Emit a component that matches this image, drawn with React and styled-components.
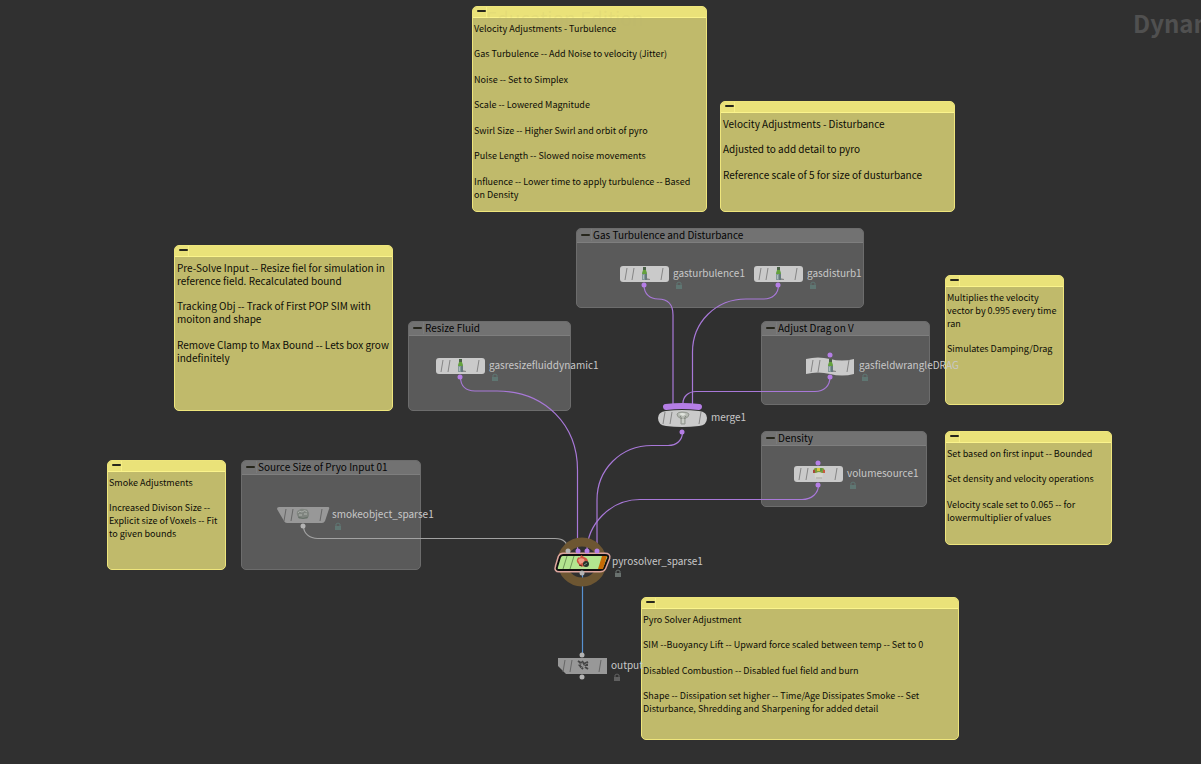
import React from "react";
import styled, { createGlobalStyle } from "styled-components";

const GlobalStyle = createGlobalStyle`
  * { box-sizing: border-box; }
  body {
    margin: 0;
    background: #303030;
    font-family: "Noto Sans CJK JP", "Noto Sans", sans-serif;
  }
  p { margin: 0; }
`;

const Canvas = styled.main`
  position: relative;
  width: 100%;
  min-height: 100vh;
  overflow: hidden;
`;

const ContextTitle = styled.h1`
  position: absolute;
  left: 1133px;
  top: 5px;
  margin: 0;
  font-size: 24px;
  line-height: 36px;
  font-weight: 700;
  color: #505050;
`;

const EditionMark = styled.div`
  position: absolute;
  left: 486px;
  top: 3px;
  font-size: 19px;
  line-height: 30px;
  color: rgba(190, 180, 110, 0.15);
  pointer-events: none;
`;

const Note = styled.article`
  position: absolute;
  left: ${(p) => p.$x}px;
  top: ${(p) => p.$y}px;
  width: ${(p) => p.$w}px;
  min-height: ${(p) => p.$h}px;
  border: 1px solid #eee57c;
  border-radius: 5px;
  background: #c0ba6b;
  overflow: hidden;
`;

const NoteHeader = styled.header`
  display: flex;
  height: 11px;
  background: #eae279;
  border-bottom: 1px solid #fbf48c;
`;

const NoteToggle = styled.button`
  display: flex;
  align-items: flex-start;
  justify-content: center;
  width: 14px;
  padding: 3px 0 0 3px;
  border: 0;
  border-right: 1px solid #f6ef86;
  background: transparent;
`;

const NoteBody = styled.div`
  padding: 4px 0 4px ${(p) => (p.$large ? 2 : 1)}px;
  font-size: ${(p) => (p.$large ? 10 : 9)}px;
  line-height: 13px;
  color: #0c0c06;
  white-space: nowrap;
  p { margin-bottom: 12px; }
  p:nth-child(even) { margin-bottom: 13px; }
  p:last-child { margin-bottom: 0; }
`;

const Dash = styled.span`
  display: block;
  width: 9px;
  height: 2px;
  border-radius: 1px;
  background: #26261c;
`;

const Group = styled.section`
  position: absolute;
  left: ${(p) => p.$x}px;
  top: ${(p) => p.$y}px;
  width: ${(p) => p.$w}px;
  height: ${(p) => p.$h}px;
  border: 1px solid #6c6c6c;
  border-radius: 5px;
  background: #5a5a5a;
  overflow: hidden;
`;

const GroupHeader = styled.header`
  display: flex;
  align-items: flex-start;
  height: 14px;
  background: #727272;
  border-bottom: 1px solid #7e7e7e;
`;

const GroupToggle = styled.button`
  display: flex;
  align-items: center;
  justify-content: center;
  width: 15px;
  height: 12px;
  padding: 0 0 0 2px;
  border: 0;
  border-right: 1px solid #7a7a7a;
  background: transparent;
`;

const GroupTitle = styled.h2`
  margin: 0 0 0 1px;
  font-size: 10px;
  line-height: 11px;
  font-weight: 400;
  color: #050505;
  white-space: nowrap;
`;

const Wires = styled.svg`
  position: absolute;
  left: 0;
  top: 0;
  width: 1px;
  height: 1px;
  overflow: visible;
  pointer-events: none;
`;

const NodeBox = styled.div`
  position: absolute;
  left: ${(p) => p.$x}px;
  top: ${(p) => p.$y}px;
  display: flex;
  align-items: center;
  gap: 4px;
`;

const NodeDrawing = styled.svg`
  display: block;
  flex: none;
  overflow: visible;
`;

const NodeLabel = styled.div`
  position: relative;
  padding-bottom: 2px;
  font-size: 10px;
  line-height: 16px;
  color: #c8c8c8;
  white-space: nowrap;
`;

const LockBadge = styled.svg`
  position: absolute;
  left: 2px;
  top: 16px;
`;

const NOTES = [
  { x: 472, y: 6, w: 235, h: 206, text: ["Velocity Adjustments - Turbulence", "Gas Turbulence -- Add Noise to velocity (Jitter)", "Noise -- Set to Simplex", "Scale -- Lowered Magnitude", "Swirl Size -- Higher Swirl and orbit of pyro", "Pulse Length -- Slowed noise movements", "Influence -- Lower time to apply turbulence -- Based\non Density"] },
  { x: 720, y: 101, w: 235, h: 111, large: true, text: ["Velocity Adjustments - Disturbance", "Adjusted to add detail to pyro", "Reference scale of 5 for size of dusturbance"] },
  { x: 174, y: 245, w: 219, h: 166, large: true, text: ["Pre-Solve Input -- Resize fiel for simulation in\nreference field. Recalculated bound", "Tracking Obj -- Track of First POP SIM with\nmoiton and shape", "Remove Clamp to Max Bound -- Lets box grow\nindefinitely"] },
  { x: 945, y: 275, w: 119, h: 130, text: ["Multiplies the velocity\nvector by 0.995 every time\nran", "Simulates Damping/Drag"] },
  { x: 945, y: 431, w: 167, h: 114, text: ["Set based on first input -- Bounded", "Set density and velocity operations", "Velocity scale set to 0.065 -- for\nlowermultiplier of values"] },
  { x: 107, y: 460, w: 119, h: 110, text: ["Smoke Adjustments", "Increased Divison Size --\nExplicit size of Voxels -- Fit\nto given bounds"] },
  { x: 641, y: 597, w: 318, h: 143, text: ["Pyro Solver Adjustment", "SIM --Buoyancy Lift -- Upward force scaled between temp -- Set to 0", "Disabled Combustion -- Disabled fuel field and burn", "Shape -- Dissipation set higher -- Time/Age Dissipates Smoke -- Set\nDisturbance, Shredding and Sharpening for added detail"] },
];

const GROUPS = [
  { x: 576, y: 228, w: 288, h: 80, title: "Gas Turbulence and Disturbance" },
  { x: 408, y: 321, w: 163, h: 90, title: "Resize Fluid" },
  { x: 761, y: 321, w: 169, h: 84, title: "Adjust Drag on V" },
  { x: 761, y: 431, w: 166, h: 76, title: "Density" },
  { x: 241, y: 460, w: 180, h: 110, title: "Source Size of Pryo Input 01" },
];

const NODES = [
  { x: 620, y: 265, name: "gasturbulence1", shape: "box", icon: "bottle", lock: "#5f7672" },
  { x: 754, y: 265, name: "gasdisturb1", shape: "box", icon: "bottle", lock: "#5f7672" },
  { x: 436, y: 357, name: "gasresizefluiddynamic1", shape: "box", icon: "bottle", lock: "#5f7672" },
  { x: 806, y: 357, name: "gasfieldwrangleDRAG", shape: "flag", icon: "bottle", input: true, lock: "#5f7672" },
  { x: 658, y: 409, name: "merge1", shape: "merge", icon: "funnel" },
  { x: 794, y: 465, name: "volumesource1", shape: "box", icon: "volume", input: true, lock: "#5f7672" },
  { x: 279, y: 506, name: "smokeobject_sparse1", shape: "trapezoid", icon: "smoke", port: "#b4b4b4", lock: "#5f7672" },
  { x: 558, y: 553, name: "pyrosolver_sparse1", shape: "solver", icon: "fire", port: "#b4b4b4", lock: "#69716e" },
  { x: 558, y: 657, name: "output", shape: "clipped", icon: "output", input: true, port: "#b4b4b4", lock: "#606060" },
];

const BODY_PATHS = {
  box: "M3 1H46Q49 1 49 4V14Q49 17 46 17H3Q0 17 0 14V4Q0 1 3 1Z",
  flag: "M0 2Q12 -1 24 2T48 2V17Q36 20 24 17T0 17Z",
  merge: "M8 2Q24 0 41 2Q49 3 49 9Q49 16 41 17Q24 19 8 17Q0 16 0 9Q0 3 8 2Z",
  trapezoid: "M0 1H49Q51 1 50 3L46 15Q45 17 43 17H8Q6 17 5 15L-2 3Q-2 1 0 1Z",
  solver: "M5 2H47Q51 2 50 5L46 15Q45 17 42 17H1Q-2 17 -1 14L2 4Q3 2 5 2Z",
  clipped: "M0 1H49V17H8L0 9Z",
};

function NodeIcon({ icon }) {
  if (icon === "bottle")
    return (
      <g>
        <path d="M26 13L30 14V15H25Z" fill="#8a8a8a" />
        <path d="M23 2H26V6L27 8V15H22V8L23 6Z" fill="#84999b" />
        <path d="M23 2H26V5H23Z" fill="#4b6248" />
        <path d="M23 5H26L27 9H22Z" fill="#64a23c" />
        <path d="M23 10H24V14H23Z" fill="#aebdbd" />
        <path d="M25 9H27V15H25Z" fill="#667a7d" />
      </g>
    );
  if (icon === "funnel")
    return (
      <g>
        <path d="M19 5Q20 3 24 3Q30 3 31 5Q31 8 28 9L27 10V15H23V10L22 9Q19 8 19 5Z" fill="#b6bab3" stroke="#92968f" />
        <path d="M21 5Q24 3 28 5L25 7Z" fill="#e0e4dd" />
        <path d="M22 7L24 10M28 7L26 10" stroke="#7e837b" fill="none" />
        <path d="M25 10V14" stroke="#dde1da" />
      </g>
    );
  if (icon === "volume")
    return (
      <g>
        <path d="M21 8H29Q29 12 27 14H22Q20 12 21 8Z" fill="#d5d5cf" />
        <path d="M21 3H29Q31 4 31 8H28Q25 6 22 8H19Q19 4 21 3Z" fill="#7c9a3c" />
        <path d="M19 5H21V8H19Z" fill="#a8483c" />
        <path d="M23 3H26V6H23Z" fill="#d8c840" />
        <path d="M26 3H28V6H26Z" fill="#5d9440" />
        <path d="M29 5H31V8H29Z" fill="#c85a40" />
        <path d="M22 13H28" stroke="#a4a4a0" />
      </g>
    );
  if (icon === "smoke")
    return (
      <g>
        <path d="M18 9Q17 5 20 4Q22 2 25 3Q29 3 29 5Q31 7 30 10L28 13H20Z" fill="#7f847f" />
        <path d="M19 7Q20 4 23 6Q26 3 28 6" stroke="#a9ada8" fill="none" />
        <path d="M20 9H23M25 8H28" stroke="#b2b5b0" />
        <path d="M19 11Q24 14 29 11" stroke="#667068" fill="none" />
      </g>
    );
  if (icon === "fire")
    return (
      <g>
        <path d="M19 9Q18 6 21 4L22 5L23 2L26 4Q30 5 30 9Q28 15 22 13Z" fill="#cd5440" />
        <path d="M20 7Q22 4 26 6L27 9L22 11Z" fill="#ee9a84" />
        <circle cx="28" cy="11" r="3" fill="#26352b" />
        <path d="M26 12L29 10" stroke="#7f9186" />
        <path d="M21 12L24 13" stroke="#5a241a" />
      </g>
    );
  return (
    <g fill="none" stroke="#454545">
      <path d="M20 4L23 6L21 9M22 9L25 12M24 4L26 7L30 5M26 8L30 8M27 10L30 12" strokeWidth="2" />
      <path d="M20 8L25 6M23 11L29 6" stroke="#7c7c7c" />
    </g>
  );
}

function Node({ node }) {
  const { shape, icon, name, lock, input, port = "#b57ee6" } = node;
  const solver = shape === "solver";
  const dim = shape === "trapezoid" || shape === "clipped";
  const fill = solver ? "#b3e58f" : dim ? "#989898" : "#cacaca";
  return (
    <NodeBox $x={node.x} $y={node.y}>
      <NodeDrawing width={solver ? 50 : 49} height="18" viewBox={solver ? "0 0 50 18" : "0 0 49 18"} aria-hidden="true">
        {solver && <circle cx="24" cy="9" r="20" fill="none" stroke="#6d5632" strokeWidth="9" />}
        {solver && <path d={BODY_PATHS.solver} fill="#dda59d" stroke="#dda59d" strokeWidth="5" />}
        <path d={BODY_PATHS[shape]} fill={fill} stroke={solver ? "#101010" : "none"} strokeWidth="2" />
        {solver && <path d="M44 3H49L45 16H40Z" fill="#c66a05" />}
        <path
          d={solver ? "M9 3L5 16M16 3L12 16" : "M7 3L5 15M14 3L12 15M43 3L41 15"}
          stroke={solver ? "#6f9458" : dim ? "#666" : "#858585"}
          fill="none"
        />
        <NodeIcon icon={icon} />
        {shape === "merge" && <path d="M8 -2Q24 -4 41 -2" stroke="#b57ee6" strokeWidth="6" strokeLinecap="round" fill="none" />}
        {input && <circle cx="24" cy="-2" r="2.5" fill={port} />}
        {solver &&
          [10, 20, 29, 39].map((cx, i) => (
            <circle key={cx} cx={cx} cy="-2" r="2.5" fill={i ? "#b57ee6" : "#b4b4b4"} />
          ))}
        <circle cx="24" cy={shape === "merge" ? 23 : 20} r="2.5" fill={port} />
      </NodeDrawing>
      <NodeLabel>
        {name}
        {lock && (
          <LockBadge width="8" height="9" viewBox="0 0 8 9" aria-hidden="true">
            <path d="M2 4V2Q4 0 6 2V4" fill="none" stroke={lock} />
            <path d="M1 4H7V8H1Z" fill={lock} />
          </LockBadge>
        )}
      </NodeLabel>
    </NodeBox>
  );
}

function StickyNote({ note }) {
  return (
    <Note $x={note.x} $y={note.y} $w={note.w} $h={note.h}>
      <NoteHeader>
        <NoteToggle type="button" aria-label="Collapse note"><Dash /></NoteToggle>
      </NoteHeader>
      <NoteBody $large={note.large}>
        {note.text.map((t) => (
          <p key={t}>
            {t.split("\n").map((line, i) => (
              <React.Fragment key={line}>
                {i > 0 && <br />}
                {line}
              </React.Fragment>
            ))}
          </p>
        ))}
      </NoteBody>
    </Note>
  );
}

export default function App() {
  return (
    <>
      <GlobalStyle />
      <Canvas>
        <ContextTitle>Dynamics</ContextTitle>
        {GROUPS.map((g) => (
          <Group key={g.title} $x={g.x} $y={g.y} $w={g.w} $h={g.h}>
            <GroupHeader>
              <GroupToggle type="button" aria-label={`Collapse ${g.title}`}><Dash /></GroupToggle>
              <GroupTitle>{g.title}</GroupTitle>
            </GroupHeader>
          </Group>
        ))}
        {NOTES.map((n) => <StickyNote key={n.text[0]} note={n} />)}
        <EditionMark>Education Edition</EditionMark>
        <Wires viewBox="0 0 1 1" aria-hidden="true">
          <g fill="none" stroke="#a878d8" strokeWidth="1.2">
            <path d="M460.500 377C460.500 386 466 391 475 391H497C545 391 577.500 425 577.500 470V551" />
            <path d="M644 285C644 294 650 299 658 299C668 299 673 305 673 315V404" />
            <path d="M778.500 285C778.500 294 772 299 764 299H746C716 299 692.500 322 692.500 352V404" />
            <path d="M830 377C830 386 824 391.500 815 391.500H696C688 391.500 683 397 683 403" />
            <path d="M682.500 432C682.500 440 677 445.500 668 445.500H652C620 445.500 597 470 597 500V551" />
            <path d="M818.500 485C818.500 493 812 499.500 802 499.500H640C610 499.500 587 525 587 551" />
            <path d="M303.500 526C303.500 533 309 538.500 318 538.500H555C564 538.500 568 543 568 551" stroke="#a2a2a2" />
            <path d="M582.500 574V655" stroke="#5791d0" />
          </g>
        </Wires>
        {NODES.map((n) => <Node key={n.name} node={n} />)}
      </Canvas>
    </>
  );
}
